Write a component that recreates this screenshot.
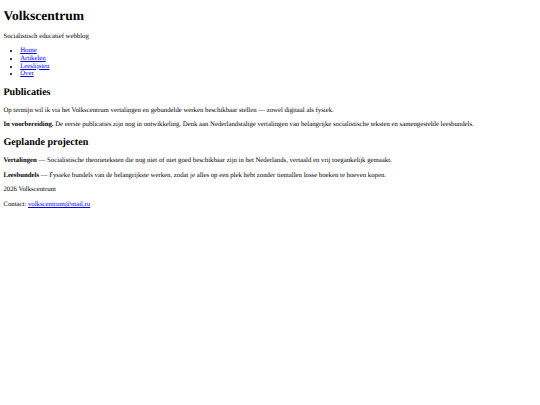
export default function App() {
  const link = "text-[#0000ee] underline";
  const p = "my-[6.75px]";
  return (
    <div className="mx-[3.375px] pt-px -mt-px text-[6.75px] leading-[7.76px] [text-rendering:geometricPrecision] text-black font-['Liberation_Serif',serif]">
      <header>
        <h1 className="text-[13.5px] leading-[15.51px] font-bold mt-[8.045px] mb-[9.045px]">Volkscentrum</h1>
        <p className={p}>Socialistisch educatief webblog</p>
        <nav>
          <ul className="list-disc pl-[16.875px] my-[6.75px]">
            <li><a className={link} href="#">Home</a></li>
            <li><a className={link} href="#">Artikelen</a></li>
            <li><a className={link} href="#">Leeslijsten</a></li>
            <li><a className={link} href="#">Over</a></li>
          </ul>
        </nav>
      </header>
      <main>
        <section>
          <h2 className="text-[10.125px] leading-[11.63px] font-bold my-[8.4px]">Publicaties</h2>
          <p className={p}>Op termijn wil ik via het Volkscentrum vertalingen en gebundelde werken beschikbaar stellen — zowel digitaal als fysiek.</p>
          <p className={p}><strong className="font-bold">In voorbereiding.</strong> De eerste publicaties zijn nog in ontwikkeling. Denk aan Nederlandstalige vertalingen van belangrijke socialistische teksten en samengestelde leesbundels.</p>
        </section>
        <section>
          <h2 className="text-[10.125px] leading-[11.63px] font-bold my-[8.4px]">Geplande projecten</h2>
          <p className={p}><strong className="font-bold">Vertalingen</strong> — Socialistische theorieteksten die nog niet of niet goed beschikbaar zijn in het Nederlands, vertaald en vrij toegankelijk gemaakt.</p>
          <p className={p}><strong className="font-bold">Leesbundels</strong> — Fysieke bundels van de belangrijkste werken, zodat je alles op een plek hebt zonder tientallen losse boeken te hoeven kopen.</p>
        </section>
      </main>
      <footer>
        <p className={p}>2026 Volkscentrum</p>
        <p className={p}>Contact: <a className={link} href="#">volkscentrum@mail.ru</a></p>
      </footer>
    </div>
  );
}
